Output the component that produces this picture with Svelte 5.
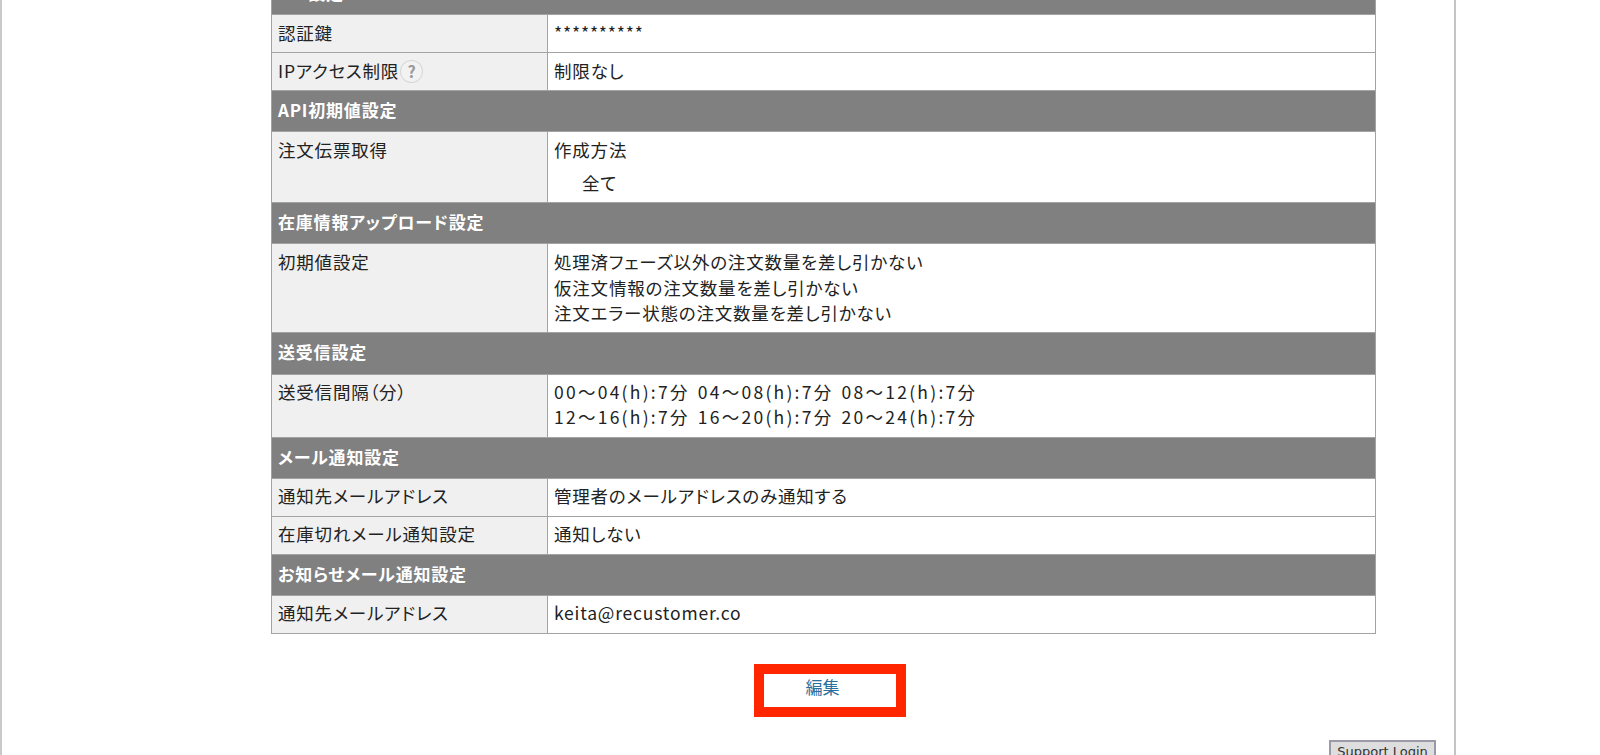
<script>
  const sections = [
    { title: 'API設定', rows: [
      { k: '認証鍵', v: ['**********'], cls: 'single' },
      { k: 'IPアクセス制限', help: true, v: ['制限なし'], cls: 'single' }
    ]},
    { title: 'API初期値設定', rows: [
      { k: '注文伝票取得', v: ['作成方法'], sub: '全て', cls: 'tall' }
    ]},
    { title: '在庫情報アップロード設定', rows: [
      { k: '初期値設定', v: ['処理済フェーズ以外の注文数量を差し引かない', '仮注文情報の注文数量を差し引かない', '注文エラー状態の注文数量を差し引かない'], cls: 'tall' }
    ]},
    { title: '送受信設定', cls: 'wide', rows: [
      { k: '送受信間隔（分）', v: ['00～04(h):7分 04～08(h):7分 08～12(h):7分', '12～16(h):7分 16～20(h):7分 20～24(h):7分'], cls: 'times' }
    ]},
    { title: 'メール通知設定', rows: [
      { k: '通知先メールアドレス', v: ['管理者のメールアドレスのみ通知する'], cls: 'single' },
      { k: '在庫切れメール通知設定', v: ['通知しない'], cls: 'single' }
    ]},
    { title: 'お知らせメール通知設定', rows: [
      { k: '通知先メールアドレス', v: ['keita@recustomer.co'], cls: 'single' }
    ]}
  ];
</script>

<div class="page">
  <div class="sheet">
    <table>
      <colgroup><col class="c1" /><col /></colgroup>
      <tbody>
        {#each sections as s}
          <tr class={['band', s.cls]}><th colspan="2">{s.title}</th></tr>
          {#each s.rows as r}
            <tr class={r.cls}>
              <td class="key">{r.k}{#if r.help}<span class="help">?</span>{/if}</td>
              <td class="val">
                {#each r.v as line}<div class="line">{line}</div>{/each}
                {#if r.sub}<div class="sub">{r.sub}</div>{/if}
              </td>
            </tr>
          {/each}
        {/each}
      </tbody>
    </table>
    <div class="actions"><a class="edit" href="#edit">編集</a></div>
    <div class="support"><button type="button">Support Login</button></div>
  </div>
</div>

<style>
  :global(body) { margin: 0; background: #fff; overflow: hidden; }
  .page {
    height: 755px;
    overflow: hidden;
    font-family: "Noto Sans CJK JP", "Noto Sans", sans-serif;
    color: #222;
  }
  .sheet {
    box-sizing: border-box;
    width: 1456px;
    margin-top: -27px;
    padding: 0 78px 0 269px;
    border-left: 2px solid #c9c9c9;
    border-right: 2px solid #c4c4c4;
  }
  table {
    width: 1105px;
    border-collapse: collapse;
    table-layout: fixed;
    font-size: 17.5px;
    line-height: 25.5px;
    letter-spacing: 0.8px;
    font-feature-settings: "palt";
  }
  .c1 { width: 276px; }
  th, td { border: 1px solid #a3a3a3; }
  .band th {
    height: 41px;
    padding: 0 6px 2px;
    box-sizing: border-box;
    background: #808080;
    color: #fff;
    font-weight: 700;
    font-size: 17px;
    text-align: left;
  }
  .band.wide th { height: 42px; }
  .key {
    padding: 4px 6px;
    background: #f0f0f0;
    vertical-align: top;
  }
  .val { padding: 4px 6px; vertical-align: top; }
  tr.single td {
    box-sizing: border-box;
    height: 38px;
    padding-top: 0;
    padding-bottom: 2px;
    vertical-align: middle;
  }
  tr.tall td { padding-top: 5px; padding-bottom: 6px; }
  tr.times td { padding-bottom: 7px; }
  tr.times .line { letter-spacing: 2.25px; word-spacing: 2px; }
  .sub { padding: 7px 0 1px 28px; }
  .help {
    display: inline-block;
    width: 21px;
    height: 21px;
    margin-left: 2px;
    border-radius: 50%;
    background: #f2f2f2;
    box-shadow: 0 0 0 1px #d8d8d8;
    color: #999;
    font-size: 16px;
    font-weight: 700;
    line-height: 21px;
    letter-spacing: 0;
    text-align: center;
    vertical-align: 0;
  }
  .actions { display: flex; justify-content: center; padding: 30px 0 0 12px; }
  .edit {
    box-sizing: border-box;
    width: 152px;
    height: 53px;
    padding-right: 14px;
    border: 10px solid #ff2600;
    color: #2b6f9e;
    font-size: 17px;
    line-height: 26px;
    text-align: center;
    text-decoration: none;
  }
  .support { display: flex; justify-content: flex-end; margin: 23px -60px 0 0; }
  .support button {
    width: 107px;
    height: 24px;
    padding: 0;
    border: 2px solid #9a9aa8;
    background: #dedede;
    color: #333;
    font-family: "DejaVu Sans", sans-serif;
    font-size: 13px;
    line-height: 20px;
  }
</style>
